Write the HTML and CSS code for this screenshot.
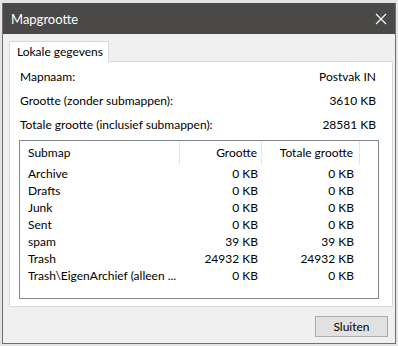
FILE: index.html
```html
<!DOCTYPE html>
<html>
<head>
<meta charset="utf-8">
<link rel="stylesheet" href="styles.css">
</head>
<body>
<div class="window">
  <div class="titlebar">
    <span class="title">Mapgrootte</span>
    <svg class="close" width="12" height="12" viewBox="0 0 12 12"><path d="M1 1 L11 11 M11 1 L1 11" stroke="#ffffff" stroke-width="1.1" fill="none"/></svg>
  </div>
  <div class="content">
    <div class="tabs"><div class="tab">Lokale gegevens</div></div>
    <div class="panel">
      <div class="info"><span>Mapnaam:</span><span>Postvak IN</span></div>
      <div class="info"><span>Grootte (zonder submappen):</span><span>3610 KB</span></div>
      <div class="info"><span>Totale grootte (inclusief submappen):</span><span>28581 KB</span></div>
      <div class="list">
        <div class="row head">
          <div class="c1">Submap</div><div class="c2">Grootte</div><div class="c3">Totale grootte</div>
        </div>
        <div class="row"><div class="c1">Archive</div><div class="c2">0 KB</div><div class="c3">0 KB</div></div>
        <div class="row"><div class="c1">Drafts</div><div class="c2">0 KB</div><div class="c3">0 KB</div></div>
        <div class="row"><div class="c1">Junk</div><div class="c2">0 KB</div><div class="c3">0 KB</div></div>
        <div class="row"><div class="c1">Sent</div><div class="c2">0 KB</div><div class="c3">0 KB</div></div>
        <div class="row"><div class="c1">spam</div><div class="c2">39 KB</div><div class="c3">39 KB</div></div>
        <div class="row"><div class="c1">Trash</div><div class="c2">24932 KB</div><div class="c3">24932 KB</div></div>
        <div class="row"><div class="c1">Trash\EigenArchief (alleen ...</div><div class="c2">0 KB</div><div class="c3">0 KB</div></div>
      </div>
    </div>
    <div class="footer"><button class="btn">Sluiten</button></div>
  </div>
</div>
</body>
</html>
```

FILE: styles.css
```css
html, body {
  margin: 0;
  padding: 0;
}
body {
  background: #e4e4e4;
  width: 398px;
  height: 346px;
  overflow: hidden;
  font-family: Lato, "Noto Sans", sans-serif;
  font-size: 12px;
  color: #000;
}
.window {
  margin: 3px 0 0 2px;
  width: 394px;
  height: 341px;
  box-sizing: border-box;
  border: 1px solid #707070;
  border-top: none;
  background: #f0f0f0;
  display: flex;
  flex-direction: column;
}
.titlebar {
  height: 31px;
  flex: none;
  background: #4a4947;
  display: flex;
  align-items: center;
  justify-content: space-between;
  padding: 0 8px 0 8px;
}
.title {
  color: #fff;
  font-size: 13px;
}
.close {
  display: block;
}
.content {
  flex: 1;
  display: flex;
  flex-direction: column;
  padding: 7px 2px 0 6px;
}
.tabs {
  display: flex;
  position: relative;
  z-index: 1;
}
.tab {
  width: 100px;
  height: 21px;
  box-sizing: border-box;
  border: 1px solid #d9d9d9;
  border-bottom: none;
  background: #fff;
  margin-bottom: -1px;
  padding-left: 7px;
  line-height: 20px;
  white-space: nowrap;
}
.panel {
  height: 246px;
  box-sizing: border-box;
  border: 1px solid #d9d9d9;
  background: #fff;
  padding: 2px 13px 0 9px;
  display: flex;
  flex-direction: column;
}
.info {
  height: 24px;
  display: flex;
  align-items: center;
  justify-content: space-between;
  padding: 0 3px 0 1px;
}
.list {
  margin-top: 4px;
  height: 159px;
  box-sizing: border-box;
  border: 1px solid #828790;
  display: flex;
  flex-direction: column;
}
.row {
  display: flex;
  height: 17px;
  align-items: center;
}
.row.head {
  height: 24px;
}
.c1 {
  width: 160px;
  box-sizing: border-box;
  padding-left: 8px;
  white-space: nowrap;
}
.c2 {
  width: 82px;
  box-sizing: border-box;
  padding-right: 4px;
  text-align: right;
}
.c3 {
  width: 98px;
  box-sizing: border-box;
  padding-right: 6px;
  text-align: right;
}
.head .c1, .head .c2, .head .c3 {
  height: 24px;
  line-height: 24px;
  border-right: 1px solid #e5e5e5;
}
.footer {
  display: flex;
  justify-content: flex-end;
  padding: 9px 5px 0 0;
}
.btn {
  width: 73px;
  height: 21px;
  box-sizing: border-box;
  border: 1px solid #adadad;
  background: #e1e1e1;
  font-family: inherit;
  font-size: 12px;
  color: #000;
  padding: 0;
  margin: 0;
}
```
